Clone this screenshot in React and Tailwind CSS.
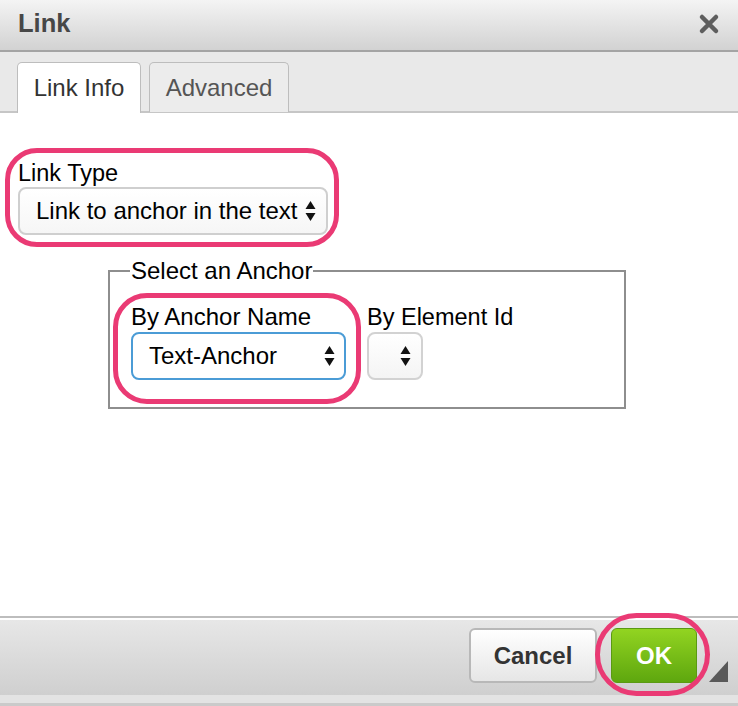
import React from 'react';

const Arrows = () => (
  <svg width="11" height="22" viewBox="0 0 11 22" className="shrink-0">
    <path d="M5.5 1 L10.5 9 L0.5 9 Z" fill="#111" />
    <path d="M5.5 21 L10.5 13 L0.5 13 Z" fill="#111" />
  </svg>
);

const CloseIcon = () => (
  <svg width="22" height="22" viewBox="0 0 22 22">
    <path d="M4 4 L18 18 M18 4 L4 18" stroke="#5e5e5e" strokeWidth="4.5" strokeLinecap="round" />
  </svg>
);

const App = () => {
  return (
    <div
      className="relative w-[738px] h-[706px] flex flex-col bg-white overflow-hidden"
      style={{ fontFamily: '"Liberation Sans", Arial, sans-serif' }}
    >
      {/* title bar */}
      <div className="h-[52px] shrink-0 flex items-center justify-between pl-[18px] pr-[18px] bg-gradient-to-b from-[#f4f4f4] to-[#d2d2d2] border-b-2 border-[#a4a4a4]">
        <span className="text-[25.5px] font-bold text-[#474747] leading-none -mt-[3px]">Link</span>
        <span className="-mt-[3px]">
          <CloseIcon />
        </span>
      </div>

      {/* tabs */}
      <div className="h-[61px] shrink-0 flex items-end gap-[8px] pl-[17px] bg-[#e9e9e9] border-b-[2px] border-[#c6c6c6]">
        <div className="h-[51px] w-[124px] -mb-[2px] flex items-center justify-center bg-white border border-b-0 border-[#bdbdbd] rounded-t-[5px] text-[24px] text-[#333]">
          Link Info
        </div>
        <div className="h-[50px] w-[140px] -mb-[1px] flex items-center justify-center bg-[#ececec] border border-b-0 border-[#bdbdbd] rounded-t-[5px] text-[24px] text-[#555]">
          Advanced
        </div>
      </div>

      {/* content */}
      <div className="flex-1 flex flex-col pt-[47px] pl-[18px] text-black">
        <label className="text-[23.5px] leading-[26px]">Link Type</label>
        <div className="mt-[1px] w-[310px] h-[48px] flex items-center justify-between pl-[16px] pr-[10px] rounded-[8px] border-2 border-[#cfcfcf] bg-gradient-to-b from-white to-[#f6f6f6] text-[24px]">
          <span>Link to anchor in the text</span>
          <Arrows />
        </div>

        <fieldset className="mt-[24px] ml-[90px] w-[518px] border-2 border-[#8e8e8e] pl-[21px] pb-[27px]">
          <legend className="text-[24px] leading-[24px] px-[1px] -ml-[1px]">Select an Anchor</legend>
          <div className="flex gap-[21px] mt-[21px]">
            <div className="flex flex-col">
              <span className="text-[24px] leading-[26px]">By Anchor Name</span>
              <div className="mt-[2px] w-[215px] h-[48px] flex items-center justify-between pl-[16px] pr-[9px] rounded-[8px] border-2 border-[#4b9cd6] bg-white text-[24px]">
                <span>Text-Anchor</span>
                <Arrows />
              </div>
            </div>
            <div className="flex flex-col">
              <span className="text-[23.5px] leading-[26px]">By Element Id</span>
              <div className="mt-[2px] w-[56px] h-[48px] flex items-center justify-end pr-[10px] rounded-[8px] border-2 border-[#d2d2d2] bg-gradient-to-b from-white to-[#f4f4f4]">
                <Arrows />
              </div>
            </div>
          </div>
        </fieldset>
      </div>

      {/* footer */}
      <div className="shrink-0 border-t-2 border-[#bdbdbd]">
        <div className="h-[2px] bg-white" />
        <div className="h-[75px] flex items-start justify-end pt-[8px] pr-[10px] bg-gradient-to-b from-[#e7e7e7] to-[#cfcfcf]">
          <button className="w-[128px] h-[55px] rounded-[6px] border-2 border-[#b8b8b8] bg-gradient-to-b from-white to-[#e6e6e6] text-[24px] font-bold text-[#333]">
            Cancel
          </button>
          <button className="ml-[14px] w-[86px] h-[55px] rounded-[6px] border border-[#5a9a12] bg-gradient-to-b from-[#92d421] to-[#5ea70e] text-[24px] font-bold text-white">
            OK
          </button>
          <svg width="19" height="21" viewBox="0 0 19 21" className="ml-[12px] mt-[33px]">
            <path d="M19 0 L19 21 L0 21 Z" fill="#595959" />
          </svg>
        </div>
        <div className="h-[8px] bg-[#e3e3e3]" />
        <div className="h-[3px] bg-[#cacaca]" />
      </div>

      {/* pink annotation rings */}
      <div className="absolute left-[5px] top-[148px] w-[334px] h-[99px] rounded-[32px] border-[5px] border-[#ea3a74] pointer-events-none" />
      <div className="absolute left-[113px] top-[293px] w-[248px] h-[111px] rounded-[34px] border-[5px] border-[#ea3a74] pointer-events-none" />
      <div className="absolute left-[595px] top-[613px] w-[115px] h-[83px] rounded-[42px] border-[5px] border-[#ea3a74] pointer-events-none" />
    </div>
  );
};

export default App;
